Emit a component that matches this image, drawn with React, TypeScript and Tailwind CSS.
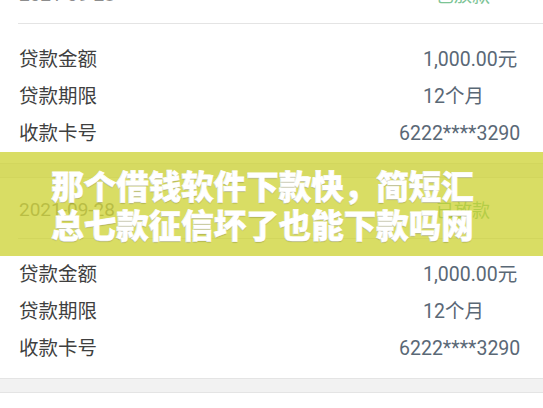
const font = "font-['Roboto','Noto_Sans_CJK_SC',sans-serif]";

type Row = { label: string; value: string; labelW: string };

const rows: Row[] = [
  { label: "贷款金额", value: "1,000.00元", labelW: "w-[404px]" },
  { label: "贷款期限", value: "12个月", labelW: "w-[404px]" },
  { label: "收款卡号", value: "6222****3290", labelW: "w-[380px]" },
];

const LoanCard = ({ date, className = "" }: { date: string; className?: string }) => (
  <div className={`bg-white ${className}`}>
    <div className="ml-[18px] flex h-[61px] items-center justify-between border-b border-[#e4e4e4] pt-[5px] pr-[53px]">
      <span className="pl-[1px] text-[19px] text-[#8d8d8d]">{date}</span>
      <span className="text-[18px] text-[#7cc495]">已放款</span>
    </div>
    <div className="pt-[17px] pb-[11px]">
      {rows.map((r) => (
        <div key={r.label} className="flex h-[37px] items-center pl-[19px] text-[19.5px]">
          <span className={`${r.labelW} text-[#3f3f3f]`}>{r.label}</span>
          <span className="text-[#5a6876]">{r.value}</span>
        </div>
      ))}
    </div>
  </div>
);

const Gap = () => <div className="h-[15px] border-y border-[#e4e4e4] bg-[#f2f2f2]" />;

export default function App() {
  return (
    <div className={`relative h-[408px] w-[543px] overflow-hidden bg-white ${font}`}>
      <div className="-mt-[37px]">
        <LoanCard date="2021-09-28" />
        <Gap />
        <LoanCard date="2021-09-28" />
        <Gap />
      </div>
      {/* title banner laid over the list */}
      <div className="absolute top-[152px] left-0 flex h-[104px] w-full flex-col items-center justify-center bg-[rgba(203,208,40,0.72)] pr-[18px]">
        <p className="font-['Noto_Sans_CJK_SC',sans-serif] text-[32.5px] leading-[39.5px] font-black text-white [paint-order:stroke_fill] [-webkit-text-stroke:0.8px_white] [text-shadow:0_1px_1px_rgba(0,0,0,0.2)]">
          那个借钱软件下款快，简短汇
        </p>
        <p className="font-['Noto_Sans_CJK_SC',sans-serif] text-[32.5px] leading-[39.5px] font-black text-white [paint-order:stroke_fill] [-webkit-text-stroke:0.8px_white] [text-shadow:0_1px_1px_rgba(0,0,0,0.2)]">
          总七款征信坏了也能下款吗网
        </p>
      </div>
    </div>
  );
}
